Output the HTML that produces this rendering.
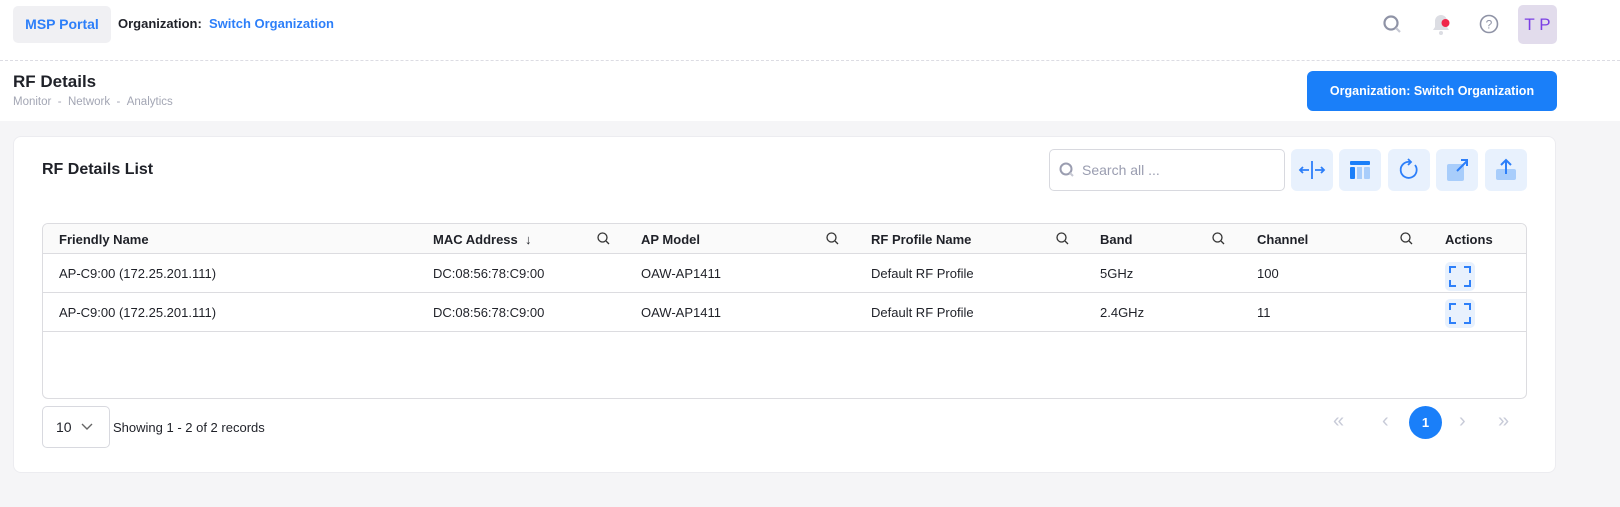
<!DOCTYPE html>
<html><head><style>
*{box-sizing:border-box;margin:0;padding:0}
body{width:1620px;height:507px;background:#f5f5f7;font-family:"Liberation Sans",sans-serif;color:#1f2128;position:relative;overflow:hidden}
.top{position:absolute;left:0;top:0;width:1620px;height:121px;background:#fff}
.hdr{position:absolute;left:0;top:60px;width:1620px;border-top:1px dashed #dcdce3}
.a{position:absolute;white-space:nowrap}
.ib{position:absolute;top:149px;width:42px;height:42px;background:#e8f1fd;border-radius:6px}
.card{position:absolute;left:13px;top:136px;width:1543px;height:337px;background:#fff;border-radius:8px;border:1px solid #ececf0}
.tbl{position:absolute;left:42px;top:223px;width:1485px;height:176px;border:1px solid #dcdce0;border-radius:6px;overflow:hidden}
.hr{position:absolute;left:0;top:0;width:100%;height:30px;background:#fafafa;border-bottom:1px solid #dcdce0}
.r{position:absolute;left:0;width:100%;border-bottom:1px solid #dcdce0}
.t{font-size:13px;color:#1f2128}
.h{font-size:13px;font-weight:bold}
.ex{position:absolute;width:30px;height:29px;background:#e8f1fd;border-radius:5px;left:1445px}
</style></head><body>
<div class="top"></div>
<div class="hdr"></div>
<div class="a" style="left:13px;top:6px;width:98px;height:37px;background:#f0f0f3;border-radius:5px;color:#2d7ff9;font-size:14px;font-weight:bold;line-height:37px;text-align:center">MSP Portal</div>
<div class="a" style="left:118px;top:16px;font-size:13px;font-weight:bold">Organization:&nbsp; <span style="color:#2d7ff9">Switch Organization</span></div>
<svg class="a" style="left:1380px;top:12px" width="24" height="24" viewBox="0 0 24 24"><circle cx="11" cy="11" r="6.5" fill="none" stroke="#8f93a6" stroke-width="2.2"/><path d="M16 16l4 4" stroke="#c6c8d3" stroke-width="2.2"/></svg>
<svg class="a" style="left:1428px;top:11px" width="26" height="26" viewBox="0 0 26 26"><path d="M5 19h16l-2-3v-6a6 6 0 0 0-12 0v6z" fill="#dcdde3"/><circle cx="13" cy="22" r="2" fill="#dcdde3"/><circle cx="17.5" cy="12" r="4" fill="#f0264a"/></svg>
<svg class="a" style="left:1478px;top:13px" width="22" height="22" viewBox="0 0 22 22"><circle cx="11" cy="11" r="8.5" fill="none" stroke="#8f93a6" stroke-width="1.6"/><text x="11" y="15.5" font-size="12" text-anchor="middle" fill="#8f93a6" font-family="Liberation Sans">?</text></svg>
<div class="a" style="left:1518px;top:5px;width:39px;height:39px;background:#e2dcec;border-radius:5px;color:#7b3fe4;font-size:17px;line-height:39px;text-align:center">T P</div>
<div class="a" style="left:13px;top:72px;font-size:17px;font-weight:bold">RF Details</div>
<div class="a" style="left:13px;top:96px;font-size:11.5px;color:#a3a6b4">Monitor &nbsp;- &nbsp;Network &nbsp;- &nbsp;Analytics</div>
<div class="a" style="left:1307px;top:71px;width:250px;height:40px;background:#1a7ff9;border-radius:6px;color:#fff;font-size:12.5px;font-weight:bold;line-height:40px;text-align:center">Organization: Switch Organization</div>
<div class="card"></div>
<div class="a" style="left:42px;top:161px;font-size:16px;font-weight:bold">RF Details List</div>
<div class="a" style="left:1049px;top:149px;width:236px;height:42px;border:1px solid #d8d9df;border-radius:5px"></div>
<svg class="a" style="left:1058px;top:161px" width="18" height="18" viewBox="0 0 18 18"><circle cx="8" cy="8" r="5.5" fill="none" stroke="#9a9db0" stroke-width="2"/><path d="M12 12l3 3" stroke="#c6c8d3" stroke-width="2"/></svg>
<div class="a" style="left:1082px;top:162px;font-size:14px;color:#9a9db0">Search all ...</div>
<div class="ib" style="left:1291px"></div><div class="ib" style="left:1339px"></div><div class="ib" style="left:1388px"></div><div class="ib" style="left:1436px"></div><div class="ib" style="left:1485px"></div>
<svg class="a" style="left:1291px;top:149px" width="42" height="42" viewBox="0 0 42 42"><path d="M21 12v18M9 21h9M33 21h-9M12 18l-3 3 3 3M30 18l3 3-3 3" fill="none" stroke="#2d7ff9" stroke-width="1.8"/></svg>
<svg class="a" style="left:1339px;top:149px" width="42" height="42" viewBox="0 0 42 42"><rect x="11" y="12" width="20" height="4" rx="1" fill="#1a7ff9"/><rect x="11" y="18" width="5" height="12" rx="1" fill="#1a7ff9"/><rect x="18" y="18" width="5" height="12" fill="#a8cdfb"/><rect x="25" y="18" width="6" height="12" rx="1" fill="#a8cdfb"/></svg>
<svg class="a" style="left:1388px;top:149px" width="42" height="42" viewBox="0 0 42 42"><path d="M27 16a8 8 0 1 1-5-3" fill="none" stroke="#2d7ff9" stroke-width="1.8"/><path d="M20 10l3 3-3 3" fill="none" stroke="#2d7ff9" stroke-width="1.8"/></svg>
<svg class="a" style="left:1436px;top:149px" width="42" height="42" viewBox="0 0 42 42"><rect x="11" y="15" width="17" height="17" rx="2" fill="#a8cdfb"/><path d="M21 22l10-10M25 11h6v6" fill="none" stroke="#2d7ff9" stroke-width="2"/></svg>
<svg class="a" style="left:1485px;top:149px" width="42" height="42" viewBox="0 0 42 42"><rect x="11" y="20" width="20" height="11" rx="2" fill="#a8cdfb"/><path d="M21 25V11M16 16l5-5 5 5" fill="none" stroke="#2d7ff9" stroke-width="2"/></svg>
<div class="tbl">
<div class="hr"></div>
<div class="r" style="top:30px;height:39px"></div>
<div class="r" style="top:69px;height:39px"></div>
</div>
<div class="a h" style="left:59px;top:232px">Friendly Name</div>
<div class="a h" style="left:433px;top:232px">MAC Address &nbsp;↓</div>
<div class="a h" style="left:641px;top:232px">AP Model</div>
<div class="a h" style="left:871px;top:232px">RF Profile Name</div>
<div class="a h" style="left:1100px;top:232px">Band</div>
<div class="a h" style="left:1257px;top:232px">Channel</div>
<div class="a h" style="left:1445px;top:232px">Actions</div>
<svg class="a" style="left:596px;top:231px" width="15" height="15" viewBox="0 0 15 15"><circle cx="6.5" cy="6.5" r="4.5" fill="none" stroke="#333" stroke-width="1.3"/><path d="M10 10l3 3" stroke="#333" stroke-width="1.3"/></svg>
<svg class="a" style="left:825px;top:231px" width="15" height="15" viewBox="0 0 15 15"><circle cx="6.5" cy="6.5" r="4.5" fill="none" stroke="#333" stroke-width="1.3"/><path d="M10 10l3 3" stroke="#333" stroke-width="1.3"/></svg>
<svg class="a" style="left:1055px;top:231px" width="15" height="15" viewBox="0 0 15 15"><circle cx="6.5" cy="6.5" r="4.5" fill="none" stroke="#333" stroke-width="1.3"/><path d="M10 10l3 3" stroke="#333" stroke-width="1.3"/></svg>
<svg class="a" style="left:1211px;top:231px" width="15" height="15" viewBox="0 0 15 15"><circle cx="6.5" cy="6.5" r="4.5" fill="none" stroke="#333" stroke-width="1.3"/><path d="M10 10l3 3" stroke="#333" stroke-width="1.3"/></svg>
<svg class="a" style="left:1399px;top:231px" width="15" height="15" viewBox="0 0 15 15"><circle cx="6.5" cy="6.5" r="4.5" fill="none" stroke="#333" stroke-width="1.3"/><path d="M10 10l3 3" stroke="#333" stroke-width="1.3"/></svg>
<div class="a t" style="left:59px;top:266px">AP-C9:00 (172.25.201.111)</div>
<div class="a t" style="left:433px;top:266px">DC:08:56:78:C9:00</div>
<div class="a t" style="left:641px;top:266px">OAW-AP1411</div>
<div class="a t" style="left:871px;top:266px">Default RF Profile</div>
<div class="a t" style="left:1100px;top:266px">5GHz</div>
<div class="a t" style="left:1257px;top:266px">100</div>
<div class="a t" style="left:59px;top:305px">AP-C9:00 (172.25.201.111)</div>
<div class="a t" style="left:433px;top:305px">DC:08:56:78:C9:00</div>
<div class="a t" style="left:641px;top:305px">OAW-AP1411</div>
<div class="a t" style="left:871px;top:305px">Default RF Profile</div>
<div class="a t" style="left:1100px;top:305px">2.4GHz</div>
<div class="a t" style="left:1257px;top:305px">11</div>
<div class="ex" style="top:262px"></div><div class="ex" style="top:299px"></div>
<svg class="a" style="left:1445px;top:262px" width="30" height="29" viewBox="0 0 30 29"><path d="M5 11V5h6M19 5h6v6M25 18v6h-6M11 24H5v-6" fill="none" stroke="#2d7ff9" stroke-width="2"/></svg>
<svg class="a" style="left:1445px;top:299px" width="30" height="29" viewBox="0 0 30 29"><path d="M5 11V5h6M19 5h6v6M25 18v6h-6M11 24H5v-6" fill="none" stroke="#2d7ff9" stroke-width="2"/></svg>
<div class="a" style="left:42px;top:406px;width:68px;height:42px;border:1px solid #d8d9df;border-radius:5px;font-size:14px;line-height:40px;padding-left:13px">10</div>
<svg class="a" style="left:80px;top:421px" width="14" height="12" viewBox="0 0 14 12"><path d="M2 3l5 5 5-5" fill="none" stroke="#666" stroke-width="1.4"/></svg>
<div class="a t" style="left:113px;top:420px">Showing 1 - 2 of 2 records</div>
<div class="a" style="left:1333px;top:410px;font-size:20px;color:#c8cbd8">«</div>
<div class="a" style="left:1382px;top:410px;font-size:20px;color:#c8cbd8">‹</div>
<div class="a" style="left:1409px;top:406px;width:33px;height:33px;border-radius:50%;background:#1a7ff9;color:#fff;font-size:13px;font-weight:bold;line-height:33px;text-align:center">1</div>
<div class="a" style="left:1459px;top:410px;font-size:20px;color:#c8cbd8">›</div>
<div class="a" style="left:1498px;top:410px;font-size:20px;color:#c8cbd8">»</div>
</body></html>
